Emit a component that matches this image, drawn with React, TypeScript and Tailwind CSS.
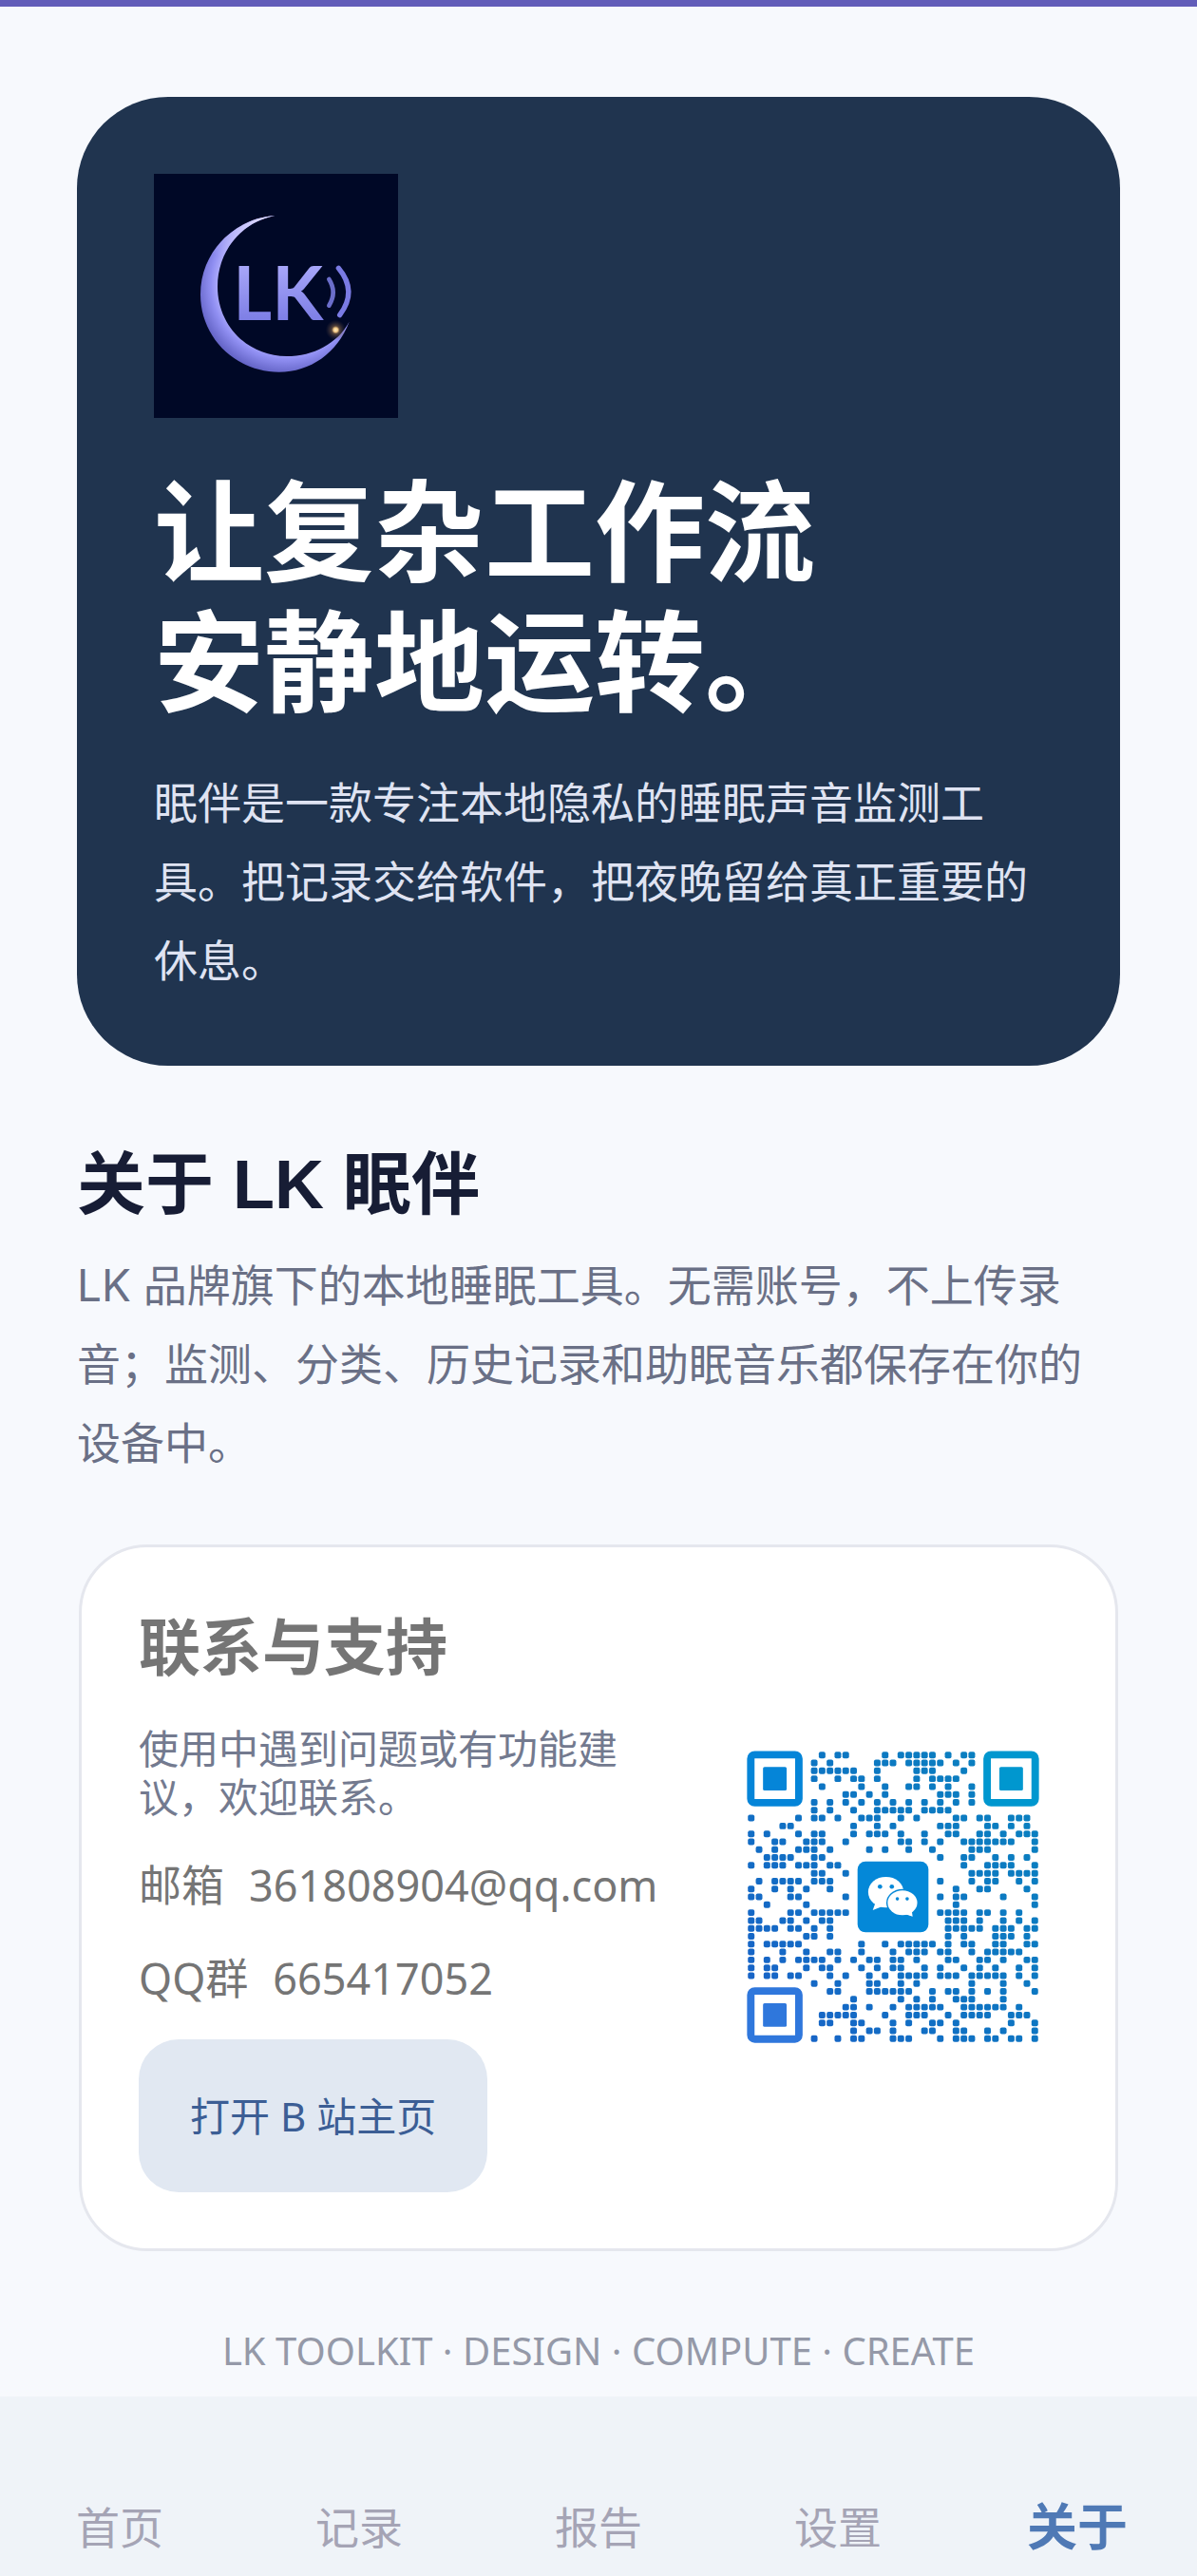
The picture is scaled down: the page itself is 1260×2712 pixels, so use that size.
import type { ReactNode } from 'react';
import { clsx } from 'clsx';

const TABS = ['首页', '记录', '报告', '设置', '关于'];

// Filled modules per row, finder patterns and centre badge excluded
const QR_ROWS = [
  [9, 11, 12, 17, 19, 20, 21, 22, 23, 25, 27, 28],
  [8, 10, 16, 17, 18, 20, 21, 22, 23, 24, 26, 28],
  [8, 9, 10, 11, 12, 13, 16, 21, 22, 23, 27],
  [8, 11, 13, 14, 16, 21, 23, 24, 25, 26],
  [9, 14, 17, 20, 21, 23, 25, 28],
  [12, 13, 15, 17, 24, 25, 26, 28],
  [8, 10, 12, 14, 16, 18, 20, 22, 24, 26, 28],
  [8, 10, 13, 16, 17, 18, 19, 20, 22, 23, 24, 25],
  [0, 6, 8, 9, 11, 14, 15, 16, 19, 21, 26, 27, 29, 30, 33, 34, 35],
  [4, 5, 13, 16, 18, 24, 25, 26, 30, 31, 33, 35],
  [0, 2, 6, 8, 9, 13, 15, 16, 17, 19, 22, 25, 26, 29, 30, 32, 34, 35, 36],
  [0, 3, 4, 7, 8, 9, 12, 19, 20, 22, 24, 27, 28, 29, 30, 31, 32, 33, 36],
  [1, 3, 6, 7, 8, 10, 15, 17, 20, 23, 28, 29, 30, 36],
  [2, 3, 4, 5, 8, 9, 24, 27, 28, 31, 33, 35],
  [0, 2, 3, 4, 6, 7, 8, 10, 11, 27, 30, 31, 32, 33, 36],
  [8, 9, 12, 28, 29, 30, 31, 33, 34, 35, 36],
  [1, 3, 4, 5, 6, 8, 9, 10, 24, 28, 30, 31, 34, 36],
  [0, 3, 5, 7, 10, 26, 29, 30, 35],
  [0, 1, 5, 6, 12, 24, 26, 27, 32, 36],
  [2, 7, 26, 36],
  [0, 5, 6, 8, 9, 10, 11, 12, 24, 25, 26, 27, 29, 30, 32, 34],
  [0, 1, 4, 5, 7, 9, 10, 25, 26, 27, 29, 32, 34, 36],
  [0, 1, 2, 3, 5, 6, 8, 10, 25, 26, 27, 28, 29, 31, 32, 33, 35, 36],
  [0, 7, 8, 10, 25, 27, 31, 32, 33, 35],
  [0, 2, 3, 4, 5, 6, 14, 17, 19, 20, 21, 22, 23, 25, 27, 28, 31, 32, 35, 36],
  [0, 4, 7, 10, 11, 14, 18, 20, 21, 22, 24, 25, 28, 30, 31, 32, 33, 34],
  [0, 2, 4, 6, 7, 8, 9, 11, 13, 15, 16, 18, 19, 21, 25, 26, 29, 30, 32, 35, 36],
  [0, 2, 3, 7, 9, 10, 14, 16, 18, 19, 22, 24, 27, 29, 31, 34, 36],
  [0, 2, 3, 5, 6, 10, 12, 15, 17, 19, 20, 21, 22, 24, 25, 26, 28, 29, 30, 31, 32, 34, 36],
  [8, 11, 15, 16, 19, 21, 28, 32, 35],
  [10, 11, 15, 16, 17, 18, 19, 20, 23, 25, 26, 28, 30, 32, 36],
  [13, 19, 21, 23, 26, 27, 28, 32],
  [12, 13, 15, 18, 20, 21, 22, 23, 24, 27, 28, 29, 30, 31, 32, 34],
  [9, 10, 11, 12, 13, 17, 20, 21, 22, 25, 27, 28, 29, 30, 33, 34, 35],
  [9, 10, 13, 14, 18, 20, 23, 24, 26, 33, 36],
  [13, 15, 16, 18, 22, 23, 26, 27, 30, 32, 36],
  [8, 11, 13, 14, 18, 19, 20, 24, 26, 27, 28, 30, 31, 33, 34, 36],
];

const MOON =
  'M298 51C170 60 63 165 63 300C63 437 175 545 311 545C410 545 495 485 533 386C495 455 420 495 335 495C213 495 117 399 117 275C117 165 190 72 298 51Z';

export default function App() {
  return (
    <div className="flex min-h-screen flex-col border-t-[7px] border-[#625db9] bg-[#f7f9fd] font-['Noto_Sans','Noto_Sans_CJK_SC',sans-serif]">
      <main className="flex-1 px-[81px] pt-[95px] pb-5">
        <section className="rounded-[96px] bg-[#20344f] px-[81px] pt-[81px] pb-[70px]">
          <Logo />
          <h1 className="mt-[55px] font-['Liberation_Sans','Noto_Sans_CJK_SC',sans-serif] text-[116px] leading-[137px] font-bold text-white">
            让复杂工作流
            <br />
            安静地运转。
          </h1>
          <p className="mt-[34px] text-[46px] leading-[83px] text-[#dfe3f2]">
            眠伴是一款专注本地隐私的睡眠声音监测工具。把记录交给软件，把夜晚留给真正重要的休息。
          </p>
        </section>

        <section className="mt-[83px]">
          <h2 className="font-['Liberation_Sans','Noto_Sans_CJK_SC',sans-serif] text-[72px] leading-[84px] font-bold text-[#171d35]">
            关于 LK 眠伴
          </h2>
          <p className="mt-[23px] font-['Inter','Noto_Sans_CJK_SC',sans-serif] text-[46px] leading-[83px] text-[#6a7086]">
            LK 品牌旗下的本地睡眠工具。无需账号，不上传录音；监测、分类、历史记录和助眠音乐都保存在你的设备中。
          </p>
        </section>

        <section className="mx-[2px] mt-[65px] flex items-center justify-between rounded-[72px] border-[3px] border-[#e5e7ee] bg-white pt-[66px] pr-[64px] pb-[59px] pl-[60px]">
          <div>
            <h3 className="text-[65px] leading-[76px] font-bold text-[#757575]">联系与支持</h3>
            <p className="mt-[44px] max-w-[528px] text-[42px] leading-[51px] text-[#737a8f]">
              使用中遇到问题或有功能建议，欢迎联系。
            </p>
            <ContactRow label="邮箱">361808904@qq.com</ContactRow>
            <ContactRow label="QQ群">665417052</ContactRow>
            <button
              type="button"
              className="mt-[34px] rounded-[42px] bg-[#e1e8f2] px-[54px] py-[50px] text-[42px] leading-[61px] text-[#3c5e95]"
            >
              打开 B 站主页
            </button>
          </div>
          <QrCode />
        </section>

        <p className="mt-[77px] text-center text-[40px] leading-[56px] text-[#9599a8]">
          LK TOOLKIT · DESIGN · COMPUTE · CREATE
        </p>
      </main>

      <nav className="grid grid-cols-5 items-center bg-[#eff3f8] pt-[107px] pb-[23px]">
        {TABS.map((tab) => (
          <button
            key={tab}
            type="button"
            className={clsx(
              'leading-[60px]',
              tab === '关于' ? 'text-[53px] font-bold text-[#4f79b5]' : 'text-[46px] text-[#a5a4b5]',
            )}
          >
            {tab}
          </button>
        ))}
      </nav>
    </div>
  );
}

function ContactRow({ label, children }: { label: string; children: ReactNode }) {
  return (
    <p className="mt-[38px] flex gap-[26px] text-[45px] leading-[60px] text-[#757575]">
      <span>{label}</span>
      <span>{children}</span>
    </p>
  );
}

function Logo() {
  return (
    <svg className="h-[257px] w-[257px]" viewBox="-84 -81 771 771" role="img" aria-label="LK">
      <defs>
        <radialGradient id="moon" gradientUnits="userSpaceOnUse" cx="335" cy="265" r="285">
          <stop offset="0.72" stopColor="#b9b6ff" />
          <stop offset="0.84" stopColor="#908ff2" />
          <stop offset="1" stopColor="#6666c8" />
        </radialGradient>
        <linearGradient id="tips" gradientUnits="userSpaceOnUse" x1="200" y1="300" x2="300" y2="50">
          <stop offset="0.3" stopColor="#d9d4ff" stopOpacity="0" />
          <stop offset="1" stopColor="#e4e0ff" />
        </linearGradient>
        <linearGradient id="letters" x1="0" y1="0" x2="0" y2="1">
          <stop offset="0.2" stopColor="#a9a8fa" />
          <stop offset="0.8" stopColor="#7f80e6" />
        </linearGradient>
        <radialGradient id="star">
          <stop offset="0" stopColor="#fff0c4" />
          <stop offset="0.22" stopColor="#f0c583" />
          <stop offset="0.4" stopColor="#8a6846" stopOpacity="0.6" />
          <stop offset="1" stopColor="#4a3a40" stopOpacity="0" />
        </radialGradient>
      </defs>
      <rect x="-84" y="-81" width="771" height="771" fill="#000826" />
      <path d={MOON} fill="url(#moon)" />
      <path d={MOON} fill="url(#tips)" />
      <text x="166" y="380" fontSize="236" fill="url(#letters)" className="font-['Lato',sans-serif] font-bold">
        LK
      </text>
      <g fill="none" strokeLinecap="round">
        <path d="M469 252Q495 293 469 335" stroke="#6b6ecb" strokeWidth="14" />
        <path d="M499 217Q560 290 503 365" stroke="#7a7be4" strokeWidth="16" />
      </g>
      <circle cx="490" cy="412" r="32" fill="url(#star)" />
    </svg>
  );
}

function Finder({ x, y, color }: { x: number; y: number; color: string }) {
  return (
    <g>
      <rect x={x + 0.45} y={y + 0.45} width="6.1" height="6.1" rx="0.5" fill="none" stroke={color} strokeWidth="0.95" />
      <rect x={x + 2} y={y + 2} width="3" height="3" rx="0.2" fill={color} />
    </g>
  );
}

function QrCode() {
  return (
    <svg className="size-[340px] shrink-0" viewBox="-2 -1.4 41 41" role="img" aria-label="微信二维码">
      <defs>
        <linearGradient id="qr" gradientUnits="userSpaceOnUse" x1="0" y1="37" x2="37" y2="8">
          <stop offset="0" stopColor="#1a60c8" />
          <stop offset="0.5" stopColor="#0f72c3" />
          <stop offset="1" stopColor="#0a80c0" />
        </linearGradient>
      </defs>
      <g fill="url(#qr)">
        {QR_ROWS.map((row, y) =>
          row.map((x) => (
            <rect key={`${x}-${y}`} x={x + 0.08} y={y + 0.08} width="0.84" height="0.84" rx="0.24" />
          )),
        )}
      </g>
      <Finder x={0} y={0} color="#0585d8" />
      <Finder x={30} y={0} color="#0097cf" />
      <Finder x={0} y={30} color="#2f77dc" />

      {/* WeChat badge */}
      <rect x="14" y="14" width="9" height="9" rx="1" fill="#0488d8" />
      <path d="M16.4 19.2L16.1 20L17.4 19.5Z" fill="#fff" stroke="#fff" strokeWidth="0.2" />
      <ellipse cx="17.6" cy="17.9" rx="2.25" ry="1.95" fill="#fff" />
      <ellipse cx="19.7" cy="19.25" rx="2.05" ry="1.75" fill="#0488d8" />
      <ellipse cx="19.7" cy="19.25" rx="1.88" ry="1.58" fill="#fff" />
      <path d="M20 20.6L20.9 20.9L20.8 20.2Z" fill="#fff" stroke="#fff" strokeWidth="0.15" />
      <g fill="#0488d8">
        <circle cx="16.85" cy="17.2" r="0.28" />
        <circle cx="18.35" cy="17.2" r="0.28" />
        <circle cx="19.05" cy="18.75" r="0.22" />
        <circle cx="20.3" cy="18.75" r="0.22" />
      </g>
    </svg>
  );
}
